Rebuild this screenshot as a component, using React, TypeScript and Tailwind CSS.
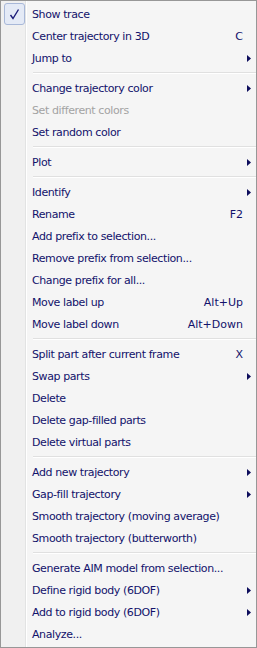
type Item =
  | { sep: true }
  | { label: string; shortcut?: string; sub?: boolean; disabled?: boolean; checked?: boolean; sep?: false }

const items: Item[] = [
  { label: 'Show trace', checked: true },
  { label: 'Center trajectory in 3D', shortcut: 'C' },
  { label: 'Jump to', sub: true },
  { sep: true },
  { label: 'Change trajectory color', sub: true },
  { label: 'Set different colors', disabled: true },
  { label: 'Set random color' },
  { sep: true },
  { label: 'Plot', sub: true },
  { sep: true },
  { label: 'Identify', sub: true },
  { label: 'Rename', shortcut: 'F2' },
  { label: 'Add prefix to selection...' },
  { label: 'Remove prefix from selection...' },
  { label: 'Change prefix for all...' },
  { label: 'Move label up', shortcut: 'Alt+Up' },
  { label: 'Move label down', shortcut: 'Alt+Down' },
  { sep: true },
  { label: 'Split part after current frame', shortcut: 'X' },
  { label: 'Swap parts', sub: true },
  { label: 'Delete' },
  { label: 'Delete gap-filled parts' },
  { label: 'Delete virtual parts' },
  { sep: true },
  { label: 'Add new trajectory', sub: true },
  { label: 'Gap-fill trajectory', sub: true },
  { label: 'Smooth trajectory (moving average)' },
  { label: 'Smooth trajectory (butterworth)' },
  { sep: true },
  { label: 'Generate AIM model from selection...' },
  { label: 'Define rigid body (6DOF)', sub: true },
  { label: 'Add to rigid body (6DOF)', sub: true },
  { label: 'Analyze...' },
]

function Arrow() {
  return (
    <svg width="4" height="7" viewBox="0 0 4 7" className="shrink-0">
      <path d="M0 0 L4 3.5 L0 7 Z" fill="#0d0d5c" />
    </svg>
  )
}

export default function App() {
  return (
    <div
      className="w-[257px] h-[648px] border border-[#979797] bg-[#f5f5f5] pt-[2px] text-[11px] tracking-[-0.4px] text-[#12126b] overflow-hidden"
      style={{ fontFamily: 'Tahoma, "DejaVu Sans", sans-serif' }}
    >
      <div className="relative">
        {/* Gutter */}
        <div className="absolute left-0 top-[-2px] h-[660px] w-[25px] bg-[#f0f0f0] border-r border-[#e2e3e3]">
          <div className="absolute right-[-2px] top-0 bottom-0 w-px bg-white" />
        </div>
        {items.map((item, i) =>
          item.sep ? (
            <div key={i} className="relative h-[8px] flex items-center pl-[32px]">
              <div className="w-full h-[2px] border-t border-[#e0e0e0] border-b border-b-white" />
            </div>
          ) : (
            <div key={i} className="relative h-[22px] flex items-center pl-[31px] pr-[5px]">
              {item.checked && (
                <div className="absolute left-[3px] top-0 w-[21px] h-[22px] rounded-[3px] border border-[#a8b8d8] bg-[#e4eaf6] flex items-center justify-center">
                  <svg width="11" height="11" viewBox="0 0 11 11">
                    <path d="M1.5 6 L4 9.5 L9.5 0.5" stroke="#1b1b78" strokeWidth="1.4" fill="none" />
                  </svg>
                </div>
              )}
              <span className={`flex-1 whitespace-nowrap pt-[2px] ${item.disabled ? 'text-[#a3a3a3]' : ''}`}>{item.label}</span>
              {item.shortcut && <span className="whitespace-nowrap pt-[2px] mr-[8px] tracking-normal">{item.shortcut}</span>}
              {item.sub && <Arrow />}
            </div>
          )
        )}
      </div>
    </div>
  )
}
